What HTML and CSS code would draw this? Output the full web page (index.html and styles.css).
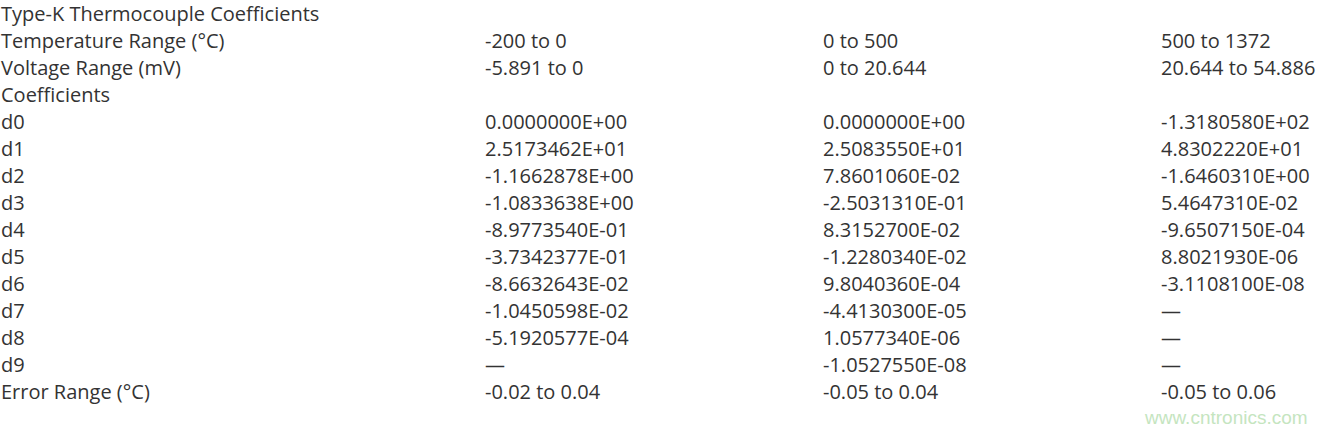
FILE: index.html
```html
<!DOCTYPE html>
<html>
<head>
<meta charset="utf-8">
<link rel="stylesheet" href="styles.css">
</head>
<body>
<div class="page">
<table class="coef">
<tr><td>Type-K Thermocouple Coefficients</td><td></td><td></td><td></td></tr>
<tr><td>Temperature Range (°C)</td><td>-200 to 0</td><td>0 to 500</td><td>500 to 1372</td></tr>
<tr><td>Voltage Range (mV)</td><td>-5.891 to 0</td><td>0 to 20.644</td><td>20.644 to 54.886</td></tr>
<tr><td>Coefficients</td><td></td><td></td><td></td></tr>
<tr><td>d0</td><td>0.0000000E+00</td><td>0.0000000E+00</td><td>-1.3180580E+02</td></tr>
<tr><td>d1</td><td>2.5173462E+01</td><td>2.5083550E+01</td><td>4.8302220E+01</td></tr>
<tr><td>d2</td><td>-1.1662878E+00</td><td>7.8601060E-02</td><td>-1.6460310E+00</td></tr>
<tr><td>d3</td><td>-1.0833638E+00</td><td>-2.5031310E-01</td><td>5.4647310E-02</td></tr>
<tr><td>d4</td><td>-8.9773540E-01</td><td>8.3152700E-02</td><td>-9.6507150E-04</td></tr>
<tr><td>d5</td><td>-3.7342377E-01</td><td>-1.2280340E-02</td><td>8.8021930E-06</td></tr>
<tr><td>d6</td><td>-8.6632643E-02</td><td>9.8040360E-04</td><td>-3.1108100E-08</td></tr>
<tr><td>d7</td><td>-1.0450598E-02</td><td>-4.4130300E-05</td><td>—</td></tr>
<tr><td>d8</td><td>-5.1920577E-04</td><td>1.0577340E-06</td><td>—</td></tr>
<tr><td>d9</td><td>—</td><td>-1.0527550E-08</td><td>—</td></tr>
<tr><td>Error Range (°C)</td><td>-0.02 to 0.04</td><td>-0.05 to 0.04</td><td>-0.05 to 0.06</td></tr>
</table>
<div class="watermark">www.cntronics.com</div>
</div>
</body>
</html>
```
FILE: styles.css
```css
html, body { margin: 0; padding: 0; background: #fff; }
.page { position: relative; width: 1328px; height: 434px; overflow: hidden; }
.coef { border-collapse: collapse; font-family: "Open Sans", "Noto Sans", sans-serif; font-size: 20px; color: #333; }
.coef td { padding: 0 0 0 1px; height: 27px; line-height: 27px; white-space: nowrap; vertical-align: top; }
.coef td:nth-child(1) { width: 483px; }
.coef td:nth-child(2) { width: 337px; }
.coef td:nth-child(3) { width: 337px; }
.coef td:nth-child(4) { width: 167px; }
.watermark { position: absolute; left: 1145px; top: 407px; font-family: "Liberation Sans", Arial, sans-serif; font-size: 19px; color: #c5e5bf; }
```
